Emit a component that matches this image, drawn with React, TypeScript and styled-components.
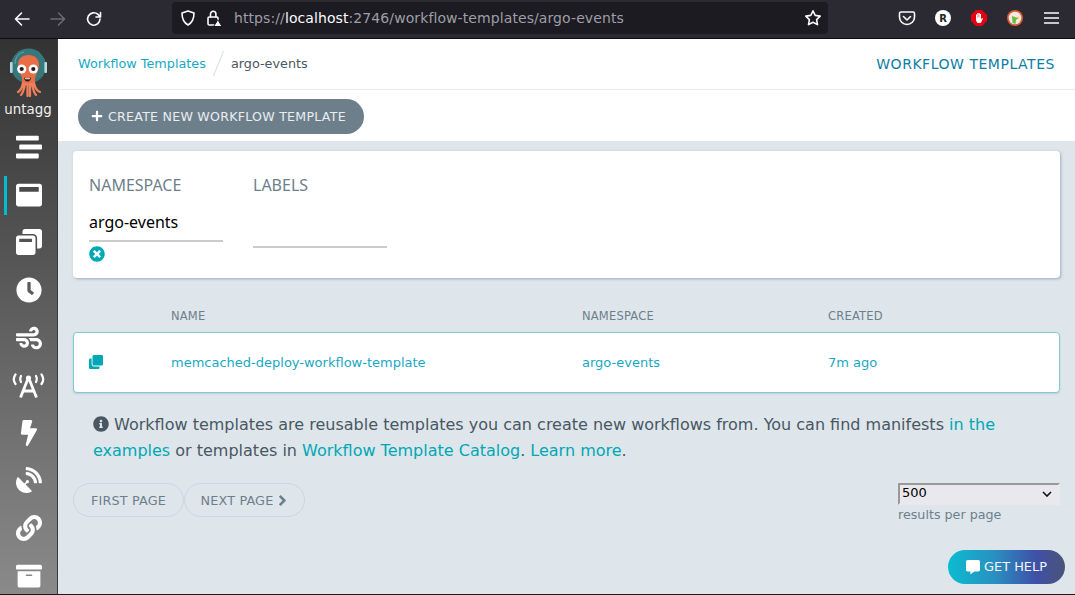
import React from 'react';
import styled, { createGlobalStyle } from 'styled-components';
import {
  FaStream, FaWindowMaximize, FaWindowRestore, FaClock, FaWind, FaBolt,
  FaSatelliteDish, FaLink, FaArchive, FaClone, FaTimesCircle, FaInfoCircle, FaPlus, FaAngleRight, FaCommentAlt,
} from 'react-icons/fa';

const Global = createGlobalStyle`
  html, body { margin: 0; padding: 0; width: 1075px; height: 595px; overflow: hidden; background: #dee6eb; }
  * { box-sizing: border-box; }
  body { font-family: "DejaVu Sans", sans-serif; }
`;

const chevron = `data:image/svg+xml,%3Csvg xmlns='http://www.w3.org/2000/svg' width='10' height='6' viewBox='0 0 10 6'%3E%3Cpath d='M1 1l4 4 4-4' fill='none' stroke='%23111' stroke-width='1.6'/%3E%3C/svg%3E`;

const Page = styled.div`
  width: 1075px; height: 595px; display: flex; flex-direction: column; position: relative;
  border-bottom: 1px solid #1a1a1a;
`;
const Chrome = styled.div`
  height: 39px; flex: none; background: #2b2a33; border-bottom: 1px solid #0c0c0d;
  display: flex; align-items: center; color: #fbfbfe;
`;
const NavButtons = styled.div`
  display: flex; align-items: center; gap: 18px; padding-left: 13px; width: 172px; flex: none;
`;
const AddressBar = styled.div`
  width: 656px; height: 32px; margin-top: -2px; flex: none; background: #1c1b22; border-radius: 4px;
  display: flex; align-items: center; padding-left: 7px; gap: 8px;
`;
const UrlText = styled.div`
  font: 14px "DejaVu Sans", sans-serif; color: #9f9ea6; margin-left: 3px; flex: 1; white-space: nowrap;
  letter-spacing: 0.09px;
`;
const UrlHost = styled.span` color: #fbfbfe; `;
const StarSlot = styled.div` margin-right: 6px; line-height: 0; `;
const ChromeTools = styled.div`
  display: flex; align-items: center; flex: 1; gap: 18px; padding-left: 70px; margin-top: -2px;
`;
const ToolSlot = styled.div` width: 18px; height: 18px; display: flex; align-items: center; justify-content: center; `;
const Body = styled.div` flex: 1; display: flex; min-height: 0; `;
const Sidebar = styled.nav`
  width: 58px; flex: none; background: linear-gradient(180deg, #333 0%, #8a8a8a 100%);
  border-right: 1px solid #3a3a3a; display: flex; flex-direction: column; align-items: center;
  padding-top: 9px; color: #fff; overflow: hidden;
`;
const Logo = styled.div` width: 40px; height: 54px; `;
const BrandName = styled.div`
  font: 13.4px "DejaVu Sans", sans-serif; color: #f0f0f0; margin: -1px 0 0 -1px; line-height: 17px;
`;
const NavList = styled.div` display: flex; flex-direction: column; width: 100%; margin-top: 5.5px; `;
const NavItem = styled.div<{ $active?: boolean }>`
  height: 47.6px; display: flex; align-items: center; justify-content: center; position: relative;
  font-size: 26px;
  ${p => p.$active ? `&::before { content: ''; position: absolute; left: 4px; top: 5px; bottom: 4px; width: 3px; background: #00bcd4; }` : ''}
`;
const Main = styled.main` flex: 1; display: flex; flex-direction: column; min-width: 0; `;
const TopBar = styled.header`
  height: 51px; flex: none; background: #fff; border-bottom: 1px solid #e8edf0;
  display: flex; align-items: center; justify-content: space-between; padding: 0 20px;
`;
const Crumbs = styled.div` display: flex; align-items: center; font-size: 12.8px; padding-bottom: 2px; `;
const CrumbLink = styled.span` color: #17a9c4; `;
const CrumbSep = styled.span`
  width: 1px; height: 27px; background: #d8e0e6; transform: rotate(22deg); margin: 0 12px;
`;
const CrumbCurrent = styled.span` color: #495763; `;
const PageTitle = styled.div` color: #0a7ea6; font-size: 14px; letter-spacing: 0.53px; `;
const ToolBar = styled.div`
  height: 51px; flex: none; background: #fff; display: flex; align-items: center; padding: 1px 20px 0;
`;
const PrimaryButton = styled.button`
  height: 35px; width: 286px; border: none; border-radius: 18px; background: #6d7f8b; color: #e9edf0;
  font: 12.6px "DejaVu Sans", sans-serif; letter-spacing: 0.25px; display: flex; align-items: center;
  gap: 5px; padding: 0 0 0 13px; white-space: nowrap;
  svg { width: 12px; height: 12px; color: #fff; }
`;
const Content = styled.div`
  flex: 1; padding: 10px 15px 0; display: flex; flex-direction: column; min-height: 0;
`;
const FilterCard = styled.section`
  height: 127px; background: #fff; border-radius: 4px; box-shadow: 1px 1px 3px rgba(138,153,165,.75);
  display: flex; gap: 30px; padding: 24px 16px 0;
`;
const FilterColumn = styled.div` width: 134px; display: flex; flex-direction: column; `;
const FilterLabel = styled.div`
  font: 16px/20px "Noto Sans", sans-serif; color: #6d7f8b;
`;
const FilterValue = styled.div<{ $tall?: boolean }>`
  height: 37px; border-bottom: 2px solid #ccc; padding-top: 4px;
  font: 16px/27px "Noto Sans", sans-serif; color: #000;
  margin-top: ${p => p.$tall ? '16px' : '10px'};
`;
const ClearIcon = styled.div`
  color: #00a8b5; font-size: 16px; line-height: 0; margin-top: 4px;
`;
const TableHead = styled.div`
  display: grid; grid-template-columns: 98px 411px 246px 1fr; padding-top: 31px; height: 54px;
  font-size: 11.5px; line-height: 14px; color: #6d7f8b; letter-spacing: 0.2px;
`;
const TableRow = styled.div`
  display: grid; grid-template-columns: 97px 411px 246px 1fr; height: 61px; background: #fff;
  border: 1px solid #7fcbd3; border-radius: 4px; align-items: center; color: #17a9c4; font-size: 13px;
  box-shadow: 0 1px 2px rgba(138,153,165,.35);
`;
const RowIcon = styled.div` padding: 0 0 2px 15px; line-height: 0; font-size: 14px; color: #00a8b5; `;
const Info = styled.p`
  margin: 19px 0 0; padding: 0 20px; font-size: 16px; line-height: 26px; color: #495763;
  svg { width: 16px; height: 16px; vertical-align: -2px; }
`;
const InlineLink = styled.span` color: #00a8b5; `;
const PagerRow = styled.div`
  display: flex; justify-content: space-between; margin-top: 19px;
`;
const PagerButtons = styled.div` display: flex; `;
const PagerButton = styled.button<{ $w: number }>`
  height: 34px; width: ${p => p.$w}px; border: 1px solid #ccd6dd; border-radius: 17px; background: transparent;
  color: #6d7f8b; font: 12.8px "DejaVu Sans", sans-serif; display: flex; align-items: center; justify-content: center;
  gap: 1px; padding: 1px 0 0; letter-spacing: 0.15px;
  svg { width: 17px; height: 17px; margin-right: -3px; }
`;
const PerPage = styled.div` width: 162px; font-size: 12.7px; color: #6d7f8b; line-height: 18px; `;
const Select = styled.select`
  display: block; width: 162px; height: 22px; font: 13px/16px "DejaVu Sans", sans-serif; color: #000;
  appearance: none; background: #e9e9ed url("${chevron}") no-repeat right 6px center;
  border: 2px solid #e9e9ed; border-top-color: #999; border-left-color: #999;
  border-radius: 0; padding: 0 0 2px 2px; margin-bottom: 1px;
`;
const HelpButton = styled.button`
  position: absolute; left: 948px; top: 550px; width: 117px; height: 34px; border: none; border-radius: 17px;
  background: linear-gradient(90deg, #0abdd0 0%, #2a8fc0 40%, #3f50a8 75%, #4a5478 100%);
  color: #f4f6fb; font: 12.9px "DejaVu Sans", sans-serif; display: flex; align-items: center; justify-content: center; gap: 4px; padding: 0 0 1px;
  svg { width: 14px; height: 14px; color: #fff; }
`;

const ChromeIcon: React.FC<{ size?: number; children: React.ReactNode; dim?: boolean }> = ({ size = 18, children, dim }) => (
  <svg width={size} height={size} viewBox="0 0 18 18" fill="none" stroke={dim ? '#6a6a72' : '#fbfbfe'} strokeWidth="1.6" strokeLinecap="round" strokeLinejoin="round">{children}</svg>
);

const ArgoLogo = () => (
  <svg width="40" height="54" viewBox="0 0 40 54">
    <circle cx="19.5" cy="18" r="17.5" fill="#37787c" />
    <path d="M6 16C6 9 10 5 15 4" stroke="#6aa6aa" strokeWidth="1" fill="none" />
    <rect x="1" y="14" width="2.6" height="11" rx="1" fill="#b9dbe0" />
    <rect x="35.400" y="14" width="2.6" height="11" rx="1" fill="#b9dbe0" />
    <path d="M19.500 7C26 7 30 11 30 17C30 23 27 26 26 30L26 37H13L13 30C12 26 9 23 9 17C9 11 13 7 19.500 7Z" fill="#e96d45" />
    <path d="M14 35C13 40 11 43 9 44M16 36C15 41 14 45 12 47M18.500 36V48M21 36V48M23 36C24 41 25 45 27 47M25 35C26 40 28 43 31 44" stroke="#ee7f5c" strokeWidth="2.300" fill="none" strokeLinecap="round" />
    <circle cx="12.700" cy="21" r="4.600" fill="#fff" /><circle cx="24.300" cy="21" r="4.600" fill="#fff" />
    <circle cx="12.700" cy="21" r="2.100" fill="#2a1a16" /><circle cx="24.300" cy="21" r="2.100" fill="#2a1a16" />
    <path d="M15 29.500c2 .8 5 .8 7 0-.5 3-2 4-3.500 4s-3-1-3.500-4z" fill="#2a1a16" />
    <path d="M16 30c1.500.4 3.500.4 5 0l-.4 1.200h-4.200z" fill="#fff" />
  </svg>
);

const TowerIcon = () => (
  <svg width="33" height="27" viewBox="0 0 33 27" fill="none" stroke="#fff" strokeWidth="2.600" strokeLinecap="round">
    <path d="M3.500 2.500C1.300 5.500 1.300 9 3.500 12M9 4C8 6 8 8 9 10M29.500 2.500C31.700 5.500 31.700 9 29.500 12M24 4C25 6 25 8 24 10" strokeWidth="2.200" />
    <circle cx="16.500" cy="6" r="2.600" fill="#fff" stroke="none" />
    <path d="M15.500 8L8.500 25.500M17.500 8L24.500 25.500M11.500 19H21.500" strokeWidth="2.800" strokeLinecap="butt" />
  </svg>
);

export default function App() {
  return (
    <Page>
      <Global />
      <Chrome>
        <NavButtons>
          <ChromeIcon><path d="M16 9H2.500M8.500 3l-6 6 6 6" /></ChromeIcon>
          <ChromeIcon dim><path d="M2 9h13.500M9.500 3l6 6-6 6" /></ChromeIcon>
          <ChromeIcon><path d="M15 9a6.200 6.200 0 1 1-2-4.600L15.500 7M15.500 2.500V7H11" /></ChromeIcon>
        </NavButtons>
        <AddressBar>
          <ChromeIcon><path d="M9 2l6 2c0 6-1.500 9.500-6 12C4.500 13.500 3 10 3 4z" /></ChromeIcon>
          <ChromeIcon>
            <rect x="3" y="8" width="10" height="8" rx="1.200" />
            <path d="M5.500 8V5a2.700 2.700 0 0 1 5.400 0v3" />
            <path d="M13 11l4 6.500H9z" fill="#fbfbfe" stroke="#1c1b22" strokeWidth="1" />
          </ChromeIcon>
          <UrlText>https://<UrlHost>localhost</UrlHost>:2746/workflow-templates/argo-events</UrlText>
          <StarSlot>
            <ChromeIcon><path d="M9 1.800l2.200 4.600 5 .7-3.600 3.500.9 5L9 13.200l-4.500 2.400.9-5L1.800 7.100l5-.7z" /></ChromeIcon>
          </StarSlot>
        </AddressBar>
        <ChromeTools>
          <ToolSlot>
            <ChromeIcon><path d="M3 3h12a1.500 1.500 0 0 1 1.500 1.500V8a7.500 7.500 0 0 1-15 0V4.500A1.500 1.500 0 0 1 3 3zM5.500 7.500L9 11l3.500-3.500" /></ChromeIcon>
          </ToolSlot>
          <ToolSlot>
            <svg width="16" height="16" viewBox="0 0 16 16">
              <circle cx="8" cy="8" r="8" fill="#fff" />
              <text x="8" y="11.500" textAnchor="middle" fontSize="10" fontWeight="700" fontFamily="DejaVu Sans" fill="#222">R</text>
            </svg>
          </ToolSlot>
          <ToolSlot>
            <svg width="16" height="16" viewBox="0 0 16 16">
              <path d="M5 0h6l5 5v6l-5 5H5l-5-5V5z" fill="#e60012" />
              <path d="M5 8V4.500h1V7.500h.3V3h1.100v4.500h.3V3h1.100v4.500H9V4h1v5.500l1-1.500 1 .5L9.800 13H6.500L5 10.500z" fill="#fff" />
            </svg>
          </ToolSlot>
          <ToolSlot>
            <svg width="16" height="16" viewBox="0 0 16 16">
              <circle cx="8" cy="8" r="8" fill="#de5833" />
              <circle cx="8" cy="8" r="6.300" fill="#f4e9e2" />
              <path d="M8 7l3.500 1-2.500 2L8.500 14 5.500 13 5 6z" fill="#65bc46" />
              <path d="M7.500 7.500l4.500-.8v1.800z" fill="#fdd20a" />
            </svg>
          </ToolSlot>
          <ToolSlot>
            <svg width="15" height="12" viewBox="0 0 15 12" stroke="#fbfbfe" strokeWidth="1.500">
              <path d="M0 1h15M0 6h15M0 11h15" />
            </svg>
          </ToolSlot>
        </ChromeTools>
      </Chrome>
      <Body>
        <Sidebar>
          <Logo><ArgoLogo /></Logo>
          <BrandName>untagg</BrandName>
          <NavList>
            <NavItem><FaStream /></NavItem>
            <NavItem $active><FaWindowMaximize /></NavItem>
            <NavItem><FaWindowRestore /></NavItem>
            <NavItem><FaClock /></NavItem>
            <NavItem><FaWind /></NavItem>
            <NavItem><TowerIcon /></NavItem>
            <NavItem><FaBolt /></NavItem>
            <NavItem><FaSatelliteDish /></NavItem>
            <NavItem><FaLink /></NavItem>
            <NavItem><FaArchive /></NavItem>
          </NavList>
        </Sidebar>
        <Main>
          <TopBar>
            <Crumbs>
              <CrumbLink>Workflow Templates</CrumbLink>
              <CrumbSep />
              <CrumbCurrent>argo-events</CrumbCurrent>
            </Crumbs>
            <PageTitle>WORKFLOW TEMPLATES</PageTitle>
          </TopBar>
          <ToolBar>
            <PrimaryButton><FaPlus />CREATE NEW WORKFLOW TEMPLATE</PrimaryButton>
          </ToolBar>
          <Content>
            <FilterCard>
              <FilterColumn>
                <FilterLabel>NAMESPACE</FilterLabel>
                <FilterValue>argo-events</FilterValue>
                <ClearIcon><FaTimesCircle /></ClearIcon>
              </FilterColumn>
              <FilterColumn>
                <FilterLabel>LABELS</FilterLabel>
                <FilterValue $tall />
              </FilterColumn>
            </FilterCard>
            <TableHead>
              <span />
              <span>NAME</span>
              <span>NAMESPACE</span>
              <span>CREATED</span>
            </TableHead>
            <TableRow>
              <RowIcon><FaClone /></RowIcon>
              <span>memcached-deploy-workflow-template</span>
              <span>argo-events</span>
              <span>7m ago</span>
            </TableRow>
            <Info>
              <FaInfoCircle /> Workflow templates are reusable templates you can create new workflows from. You can find manifests <InlineLink>in the examples</InlineLink> or templates in <InlineLink>Workflow Template Catalog</InlineLink>. <InlineLink>Learn more</InlineLink>.
            </Info>
            <PagerRow>
              <PagerButtons>
                <PagerButton $w={111}>FIRST PAGE</PagerButton>
                <PagerButton $w={121}>NEXT PAGE <FaAngleRight /></PagerButton>
              </PagerButtons>
              <PerPage>
                <Select defaultValue="500"><option value="500">500</option></Select>
                results per page
              </PerPage>
            </PagerRow>
          </Content>
        </Main>
      </Body>
      <HelpButton><FaCommentAlt />GET HELP</HelpButton>
    </Page>
  );
}
